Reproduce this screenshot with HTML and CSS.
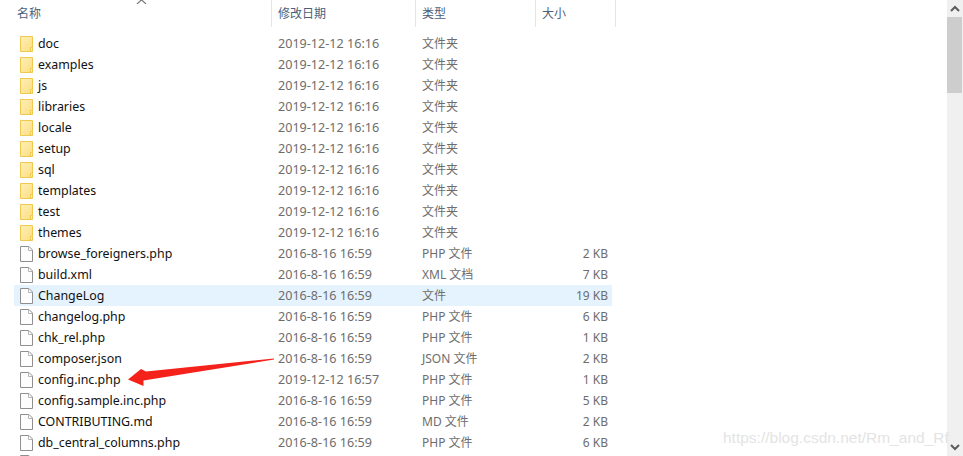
FILE: index.html
```html
<!DOCTYPE html>
<html lang="zh">
<head>
<meta charset="utf-8">
<title>Explorer</title>
<link rel="stylesheet" href="styles.css">
</head>
<body>
<svg width="0" height="0" class="defs">
  <defs>
    <linearGradient id="fold" x1="0" y1="0" x2="1" y2="1">
      <stop offset="0" stop-color="#fff0b8"/>
      <stop offset="1" stop-color="#fcdc80"/>
    </linearGradient>
  </defs>
  <symbol id="folder" viewBox="0 0 13 16">
    <path d="M.5.5H12.5V15.5H.5Z" fill="url(#fold)" stroke="#efc84e"/>
    <path d="M10.5 15.5V11.5H12.5" fill="#fff4c8" stroke="#efc84e"/>
  </symbol>
  <symbol id="file" viewBox="0 0 13 16">
    <path d="M.5.5H9L12.5 4V15.5H.5Z" fill="#fdfdfd" stroke="#8f8f8f"/>
    <path d="M8.5.5V4.5H12.5" fill="none" stroke="#b5b5b5"/>
  </symbol>
</svg>
<div class="window">
  <main class="list">
    <header class="head">
      <div class="hcell hname">名称<span class="sort"><svg width="11" height="5" viewBox="0 0 11 5"><path d="M1 5L5.5 .8L10 5" fill="none" stroke="#7a7a7a" stroke-width="1.2"/></svg></span></div>
      <div class="hcell hdate">修改日期</div>
      <div class="hcell htype">类型</div>
      <div class="hcell hsize">大小</div>
    </header>
    <div class="rows">
      <div class="row"><span class="name"><svg class="icon"><use href="#folder"/></svg>doc</span><span class="cell date">2019-12-12 16:16</span><span class="cell">文件夹</span><span class="cell size"></span></div>
      <div class="row"><span class="name"><svg class="icon"><use href="#folder"/></svg>examples</span><span class="cell date">2019-12-12 16:16</span><span class="cell">文件夹</span><span class="cell size"></span></div>
      <div class="row"><span class="name"><svg class="icon"><use href="#folder"/></svg>js</span><span class="cell date">2019-12-12 16:16</span><span class="cell">文件夹</span><span class="cell size"></span></div>
      <div class="row"><span class="name"><svg class="icon"><use href="#folder"/></svg>libraries</span><span class="cell date">2019-12-12 16:16</span><span class="cell">文件夹</span><span class="cell size"></span></div>
      <div class="row"><span class="name"><svg class="icon"><use href="#folder"/></svg>locale</span><span class="cell date">2019-12-12 16:16</span><span class="cell">文件夹</span><span class="cell size"></span></div>
      <div class="row"><span class="name"><svg class="icon"><use href="#folder"/></svg>setup</span><span class="cell date">2019-12-12 16:16</span><span class="cell">文件夹</span><span class="cell size"></span></div>
      <div class="row"><span class="name"><svg class="icon"><use href="#folder"/></svg>sql</span><span class="cell date">2019-12-12 16:16</span><span class="cell">文件夹</span><span class="cell size"></span></div>
      <div class="row"><span class="name"><svg class="icon"><use href="#folder"/></svg>templates</span><span class="cell date">2019-12-12 16:16</span><span class="cell">文件夹</span><span class="cell size"></span></div>
      <div class="row"><span class="name"><svg class="icon"><use href="#folder"/></svg>test</span><span class="cell date">2019-12-12 16:16</span><span class="cell">文件夹</span><span class="cell size"></span></div>
      <div class="row"><span class="name"><svg class="icon"><use href="#folder"/></svg>themes</span><span class="cell date">2019-12-12 16:16</span><span class="cell">文件夹</span><span class="cell size"></span></div>
      <div class="row"><span class="name"><svg class="icon"><use href="#file"/></svg>browse_foreigners.php</span><span class="cell date">2016-8-16 16:59</span><span class="cell">PHP 文件</span><span class="cell size">2 KB</span></div>
      <div class="row"><span class="name"><svg class="icon"><use href="#file"/></svg>build.xml</span><span class="cell date">2016-8-16 16:59</span><span class="cell">XML 文档</span><span class="cell size">7 KB</span></div>
      <div class="row hover"><span class="name"><svg class="icon"><use href="#file"/></svg>ChangeLog</span><span class="cell date">2016-8-16 16:59</span><span class="cell">文件</span><span class="cell size">19 KB</span></div>
      <div class="row"><span class="name"><svg class="icon"><use href="#file"/></svg>changelog.php</span><span class="cell date">2016-8-16 16:59</span><span class="cell">PHP 文件</span><span class="cell size">6 KB</span></div>
      <div class="row"><span class="name"><svg class="icon"><use href="#file"/></svg>chk_rel.php</span><span class="cell date">2016-8-16 16:59</span><span class="cell">PHP 文件</span><span class="cell size">1 KB</span></div>
      <div class="row"><span class="name"><svg class="icon"><use href="#file"/></svg>composer.json</span><span class="cell date">2016-8-16 16:59</span><span class="cell">JSON 文件</span><span class="cell size">2 KB</span></div>
      <div class="row"><span class="name"><svg class="icon"><use href="#file"/></svg>config.inc.php</span><span class="cell date">2019-12-12 16:57</span><span class="cell">PHP 文件</span><span class="cell size">1 KB</span></div>
      <div class="row"><span class="name"><svg class="icon"><use href="#file"/></svg>config.sample.inc.php</span><span class="cell date">2016-8-16 16:59</span><span class="cell">PHP 文件</span><span class="cell size">5 KB</span></div>
      <div class="row"><span class="name"><svg class="icon"><use href="#file"/></svg>CONTRIBUTING.md</span><span class="cell date">2016-8-16 16:59</span><span class="cell">MD 文件</span><span class="cell size">2 KB</span></div>
      <div class="row"><span class="name"><svg class="icon"><use href="#file"/></svg>db_central_columns.php</span><span class="cell date">2016-8-16 16:59</span><span class="cell">PHP 文件</span><span class="cell size">6 KB</span></div>
      <div class="row clip"><span class="name"><svg class="icon"><use href="#file"/></svg></span></div>
    </div>
  </main>
  <aside class="scrollbar">
    <div class="sb-btn"><svg width="10" height="7" viewBox="0 0 10 7"><path d="M1 6L5 2L9 6" fill="none" stroke="#5c5c5c" stroke-width="2"/></svg></div>
    <div class="thumb"></div>
    <div class="track"></div>
    <div class="sb-btn"><svg width="10" height="7" viewBox="0 0 10 7"><path d="M1 1L5 5L9 1" fill="none" stroke="#5c5c5c" stroke-width="2"/></svg></div>
  </aside>
</div>
<svg class="arrow" width="150" height="32" viewBox="0 0 150 32"><path d="M146 .5L18 13.500L13 11L0 21.500L15.500 28L15.500 22.500L146 1.500Z" fill="#f5221b"/></svg>
<div class="watermark">https://blog.csdn.net/Rm_and_Rf</div>
</body>
</html>
```
FILE: styles.css
```css
* { box-sizing: border-box; }
html, body { margin: 0; height: 100%; overflow: hidden; background: #fff; }
body {
  position: relative;
  font-family: "Noto Sans", "Noto Sans CJK SC", sans-serif;
  font-size: 12px;
}
.defs { position: absolute; }
.window { display: flex; height: 456px; }
.list { flex: 1; min-width: 0; overflow: hidden; }
.head { display: flex; height: 27px; margin-bottom: 6px; color: #4c607a; }
.hcell {
  position: relative;
  height: 27px;
  line-height: 27px;
  border-right: 1px solid #e5e5e5;
  padding-left: 6px;
}
.hname { width: 272px; padding-left: 17px; }
.hdate { width: 144px; }
.htype { width: 120px; }
.hsize { width: 80px; }
.sort { position: absolute; left: 136px; top: -1px; line-height: 0; }
.rows { margin-left: 14px; width: 598px; }
.row {
  display: grid;
  grid-template-columns: 258px 144px 120px 76px;
  height: 21px;
  line-height: 21px;
  color: #6d6d6d;
  white-space: nowrap;
}
.row.hover { background: #e5f3ff; }
.name { display: flex; align-items: center; gap: 5px; padding-left: 6px; color: #111; font-size: 12.4px; }
.icon { width: 13px; height: 16px; flex: none; }
.clip .name { align-items: flex-start; padding-top: 2px; }
.cell { padding-left: 6px; }
.date { font-size: 12.6px; }
.size { text-align: right; padding-right: 4px; }
.scrollbar { width: 16px; flex: none; display: flex; flex-direction: column; background: #f0f0f0; }
.sb-btn { height: 17px; display: flex; align-items: center; justify-content: center; flex: none; }
.thumb { height: 76px; width: 15px; background: #cdcdcd; flex: none; }
.track { flex: 1; }
.arrow { position: absolute; left: 128px; top: 358px; }
.watermark {
  position: absolute;
  left: 723px;
  top: 427px;
  font-family: "Liberation Sans", sans-serif;
  font-size: 15.5px;
  line-height: 22px;
  color: #e4e4e4;
  white-space: nowrap;
}
```
